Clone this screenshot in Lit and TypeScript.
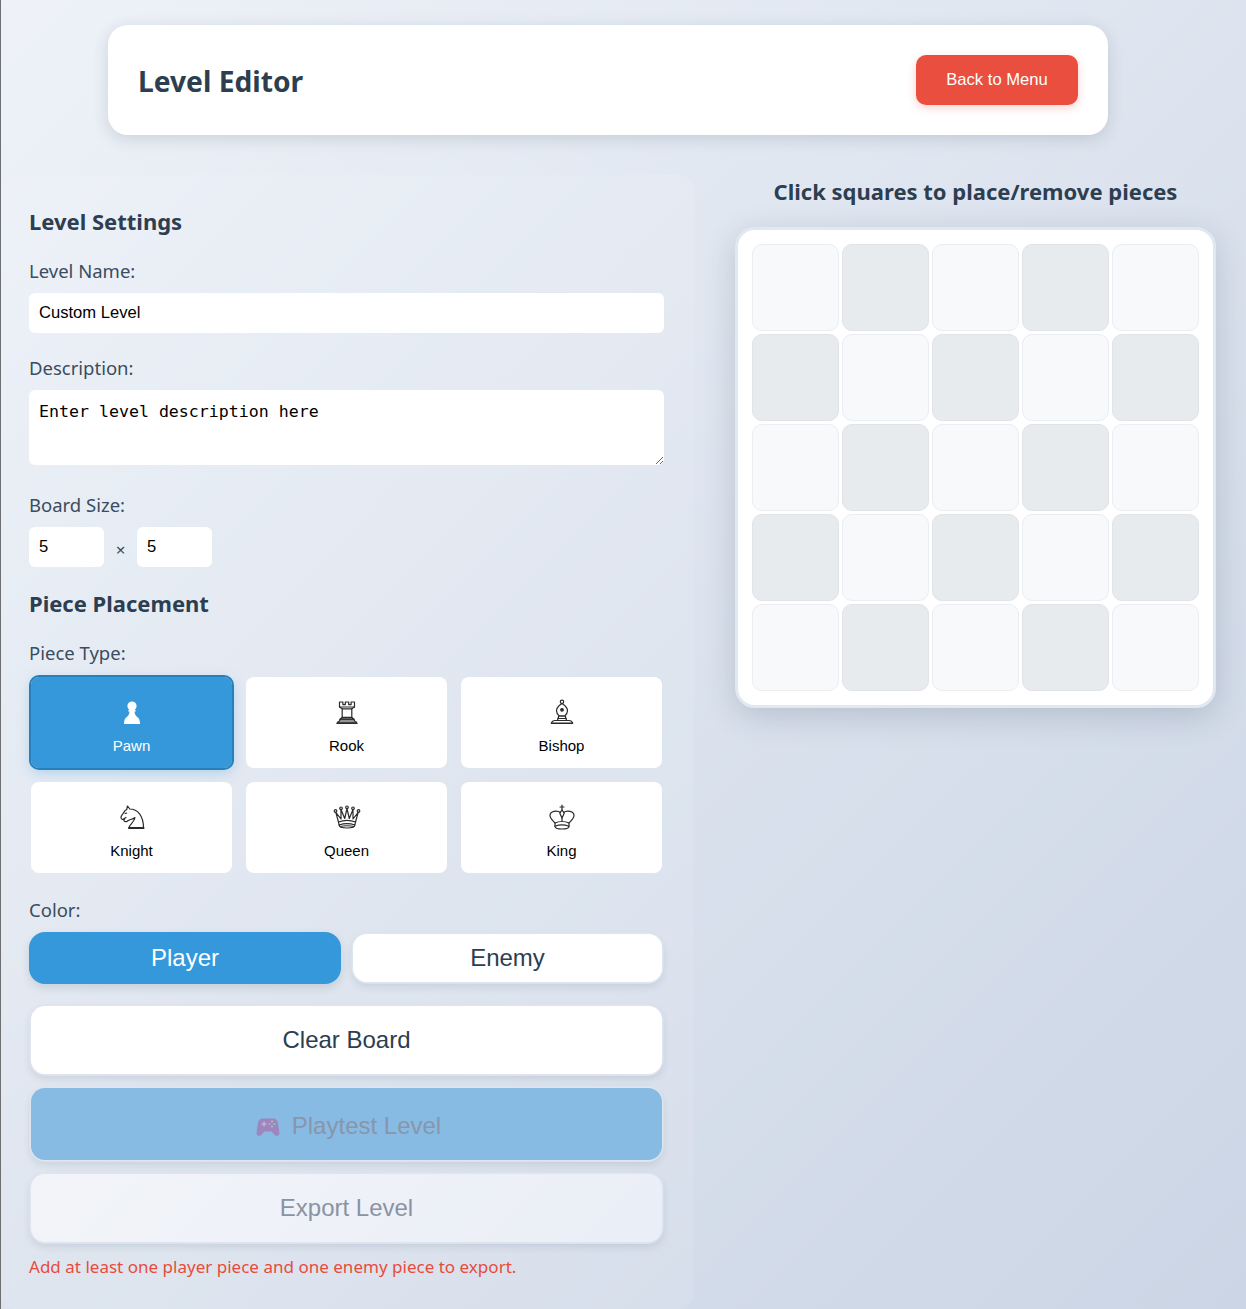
import { LitElement, html, css, svg } from "lit";
import { customElement } from "lit/decorators.js";

const ICONS: Record<string, unknown> = {
  Pawn: svg`<g fill="#fff" stroke="none"><circle cx="14" cy="7" r="4.600"/><path d="M10.500 11h7l.3 1.600h-1.300c.2 2.900 1.300 4.400 3.300 6 1.500 1.300 2.200 3.200 2.200 6.400H6c0-3.200.7-5.100 2.200-6.400 2-1.600 3.100-3.100 3.300-6h-1.300z"/></g>`,
  Rook: svg`<path d="M6.500 3h3.400v2.600h2.400V3h3.400v2.600h2.400V3h3.400v5l-2.700 1.800v8.600l2.200 1.800H7l2.200-1.800V9.800L6.500 8z"/><path d="M6.500 8h15M9.200 9.800h9.600M9.200 18.400h9.600"/><path d="M6.500 22h15"/><path d="M7 20.200h14l.5 1.800c1.300.2 2.200 1 2.200 2.200H4.300c0-1.200.9-2 2.200-2.200z"/><path d="M4.300 24.200h19.400" stroke-width="1.700"/>`,
  Bishop: svg`<circle cx="14" cy="2.800" r="1.700"/><path d="M14 4.500c-2 1.500-5.500 3.500-5.500 7.200 0 2.700 1.700 4.300 2.700 5.300h5.600c1-1 2.700-2.600 2.700-5.300 0-3.700-3.500-5.700-5.500-7.200z"/><circle cx="14" cy="10.800" r="1.300" fill="#333"/><path d="M10.800 17h6.400l.8 2.500H10z"/><path d="M10 19.500h8l.6 2H9.400z"/><path d="M3.500 24c.4-1.700 2-2.500 3.500-2.500h14c1.500 0 3.100.8 3.500 2.500" fill="none"/><path d="M3.500 24.200h21" stroke-width="1.600"/>`,
  Knight: svg`<path d="M11 24c.2-4 5.500-5.500 6-10.500-2.500 2.200-5.500 1.800-7.500 3.500-1 1-2.800 1-3.500-.3-.2-.5.100-.9.500-1.200-1.800.5-3.500-.5-3.500-2 0-2.500 3-4.500 4.200-7.200l1.500-.6.800-3.700L11.800 5c7.700 0 13.700 6.500 13.700 19z"/><path d="M11 24h14.500" stroke-width="2"/><path d="M5.500 15l2.500-1.500M7.200 9.500l1.500-.5"/>`,
  Queen: svg`<circle cx="2.500" cy="7" r="1.300"/><circle cx="8" cy="4.300" r="1.300"/><circle cx="14" cy="3.300" r="1.300"/><circle cx="20" cy="4.300" r="1.300"/><circle cx="25.500" cy="7" r="1.300"/><path d="M5.500 18 2.800 8.300 8 15 8 5.600 11.700 14.500 14 4.600 16.300 14.500 20 5.600 20 15 25.200 8.300 22.500 18"/><path d="M5.500 18c5-2 12-2 17 0l-.6 3c-5-1.700-10.800-1.700-15.800 0z"/><path d="M6.100 21c0 2 2.400 3 7.900 3s7.900-1 7.900-3"/><path d="M7 22.500c4-1 10-1 14 0" stroke-width="1"/>`,
  King: svg`<path d="M14 1v5M12 3h4"/><path d="M14 6l2.200 3.200L14 14l-2.200-4.800z"/><path d="M12.500 8.500C9 6 2 7 2 11.500c0 3 2.800 5 5 7.500 4-2 10-2 14 0 2.200-2.500 5-4.500 5-7.500 0-4.500-7-5.500-10.500-3"/><path d="M14 14v3.500"/><path d="M7 19v3.200c4-1.400 10-1.400 14 0V19"/><path d="M7 22.200c0 2 3 2.800 7 2.800s7-.8 7-2.800"/>`,
};

const PIECES = ["Pawn", "Rook", "Bishop", "Knight", "Queen", "King"];

const pad = svg`<path d="M7 2.500h10c3 0 4.500 2 5.100 4.700l1.300 9.300c.4 3-2.800 4.600-4.900 2.300L15.500 15.500h-7l-3 3.300c-2.100 2.300-5.300.7-4.900-2.300l1.300-9.300C2.500 4.500 4 2.500 7 2.500z" fill="#9c86bd"/><rect x="5.500" y="7.300" width="5" height="1.500" fill="#c0b3dc"/><rect x="7.300" y="5.500" width="1.500" height="5" fill="#c0b3dc"/><circle cx="16" cy="5.500" r="1.100" fill="#b9c2a0"/><circle cx="18.500" cy="8" r="1.100" fill="#8fc4b8"/><circle cx="13.500" cy="8" r="1.100" fill="#c9a3c0"/><circle cx="16" cy="10.500" r="1.100" fill="#a8b4dc"/>`;

@customElement("app-root")
export class AppRoot extends LitElement {
  static styles = css`
    :host { display: block; width: 1246px; height: 1309px; overflow: hidden; box-sizing: border-box;
      font-family: "Noto Sans", "Open Sans", sans-serif; color: #2c3e50;
      background: linear-gradient(135deg, #eef2f8 0%, #cbd5e5 100%); position: relative; }
    * { box-sizing: border-box; }
    .edge { position: absolute; left: 0; top: 0; bottom: 0; width: 1px; background: #6d6f73; }
    .page { display: flex; flex-direction: column; padding-top: 25px; }
    .header { width: 1000px; height: 110px; margin-left: 108px; background: #fff; border-radius: 20px;
      display: flex; align-items: center; justify-content: space-between; padding: 0 30px;
      box-shadow: 0 4px 16px rgba(44,62,80,.16); }
    h1 { margin: 0; padding-top: 2px; font-size: 28.200px; font-weight: 700; line-height: 40px; }
    .back { width: 162px; height: 50px; border-radius: 10px; border: 0; background: #e94e3e; color: #fff;
      font: 16.600px "Liberation Sans", Arial, sans-serif; box-shadow: 0 3px 8px rgba(231,76,60,.25); }
    .main { display: flex; margin-top: 40px; }
    .panel { width: 694px; height: 1134px; padding: 29px 30px 0 29px; border-radius: 16px;
      background: rgba(255,255,255,.1); display: flex; flex-direction: column; }
    h2 { margin: 0; font-size: 22px; font-weight: 700; line-height: 34px; }
    label { display: block; font-size: 18.500px; line-height: 26px; color: #3a4c5f; }
    input, textarea { display: block; border: 0; background: #fff; border-radius: 6px; color: #000; margin: 0; }
    .name { width: 635px; height: 40px; padding: 0 10px; font: 16.600px "Liberation Sans", Arial, sans-serif; margin-top: 9px; }
    .desc { width: 635px; height: 75px; padding: 11px 10px; margin-top: 9px; font: 16.600px/22px "DejaVu Sans Mono", monospace; }
    .size { display: flex; align-items: center; margin-top: 9px; }
    .num { width: 75px; height: 40px; padding: 0 10px; font: 16.600px "Liberation Sans", Arial, sans-serif; }
    .x { width: 33px; text-align: center; font-size: 17px; padding-top: 5px; color: #3a4c5f; }
    .types { display: grid; grid-template-columns: repeat(3, 201px); gap: 14px; margin: 11px 0 0 2px; }
    .type { height: 91px; background: #fff; border-radius: 8px; display: flex; flex-direction: column; align-items: center;
      font: 15px "Liberation Sans", Arial, sans-serif; color: #000; }
    .type svg { display: block; margin-top: 22px; width: 28px; height: 28px; fill: none; stroke: #2a2a2a; stroke-width: 1.200; stroke-linejoin: round; stroke-linecap: round; }
    .type .t { margin-top: 10px; line-height: 17px; }
    .type.on { background: #3498db; color: #fff; outline: 2px solid #2980b9; box-shadow: 0 4px 14px rgba(52,152,219,.35); }
    .colors { display: flex; gap: 12px; margin-top: 9px; }
    .btn { border: 0; background: #fff; color: #2c3e50; font: 24px "Liberation Sans", Arial, sans-serif; border-radius: 14px;
      display: flex; align-items: center; justify-content: center; gap: 12px;
      box-shadow: 0 0 0 1.500px rgba(222,229,240,.95), 0 3px 0 -1px rgba(215,223,235,.9), 0 4px 9px rgba(44,62,80,.14); }
    .c1 { width: 312px; height: 52px; background: #3498db; color: #fff; box-shadow: 0 4px 9px rgba(44,62,80,.14); border-radius: 16px; }
    .c2 { width: 309px; height: 48px; margin-top: 2px; }
    .wide { width: 631px; margin-left: 2px; }
    .clear { height: 68px; margin-top: 22px; }
    .play { height: 72px; margin-top: 14px; padding: 3px 0 0 4px; background: #87bbe4; color: #8896aa; }
    .play svg { margin-top: 4px; }
    .exp { height: 68px; margin-top: 14px; background: linear-gradient(135deg, #f2f4f9, #eaeef6); color: #8a93a3; }
    .err { margin-top: 13px; font-size: 17.050px; line-height: 24px; color: #e74c3c; }
    .right { width: 481px; margin-left: 41px; margin-top: -1px; }
    h3 { margin: 0; text-align: center; font-size: 22px; font-weight: 700; line-height: 34px; }
    .board { margin-top: 19px; width: 481px; height: 481px; background: #fff; border-radius: 20px; padding: 14px;
      border: 3px solid #e2e8f1; box-shadow: 0 8px 32px rgba(44,62,80,.2);
      display: grid; grid-template-columns: repeat(5, 87px); grid-auto-rows: 87px; gap: 3px; }
    .cell { border-radius: 10px; border: 1px solid #ebedf1; background: #f8f9fa; }
    .cell.d { background: #e8ebee; border-color: #e0e3e7; }
  `;

  render() {
    const cells = Array.from({ length: 25 }, (_, i) => i % 2 === 1);
    return html`
      <div class="edge"></div>
      <div class="page">
        <div class="header"><h1>Level Editor</h1><button class="back">Back to Menu</button></div>
        <div class="main">
          <div class="panel">
            <h2>Level Settings</h2>
            <label style="margin-top:20px">Level Name:</label>
            <input class="name" .value=${"Custom Level"} />
            <label style="margin-top:22px">Description:</label>
            <textarea class="desc" .value=${"Enter level description here"}></textarea>
            <label style="margin-top:27px">Board Size:</label>
            <div class="size"><input class="num" .value=${"5"} /><span class="x">×</span><input class="num" .value=${"5"} /></div>
            <h2 style="margin-top:19px">Piece Placement</h2>
            <label style="margin-top:20px">Piece Type:</label>
            <div class="types">
              ${PIECES.map((t, i) => html`<div class="type ${i === 0 ? "on" : ""}"><svg viewBox="0 0 28 28">${ICONS[t]}</svg><span class="t">${t}</span></div>`)}
            </div>
            <label style="margin-top:24px">Color:</label>
            <div class="colors"><div class="btn c1">Player</div><div class="btn c2">Enemy</div></div>
            <div class="btn wide clear">Clear Board</div>
            <div class="btn wide play"><svg width="24" height="24" viewBox="0 0 24 24">${pad}</svg>Playtest Level</div>
            <div class="btn wide exp">Export Level</div>
            <div class="err">Add at least one player piece and one enemy piece to export.</div>
          </div>
          <div class="right">
            <h3>Click squares to place/remove pieces</h3>
            <div class="board">${cells.map((d) => html`<div class="cell ${d ? "d" : ""}"></div>`)}</div>
          </div>
        </div>
      </div>
    `;
  }
}
